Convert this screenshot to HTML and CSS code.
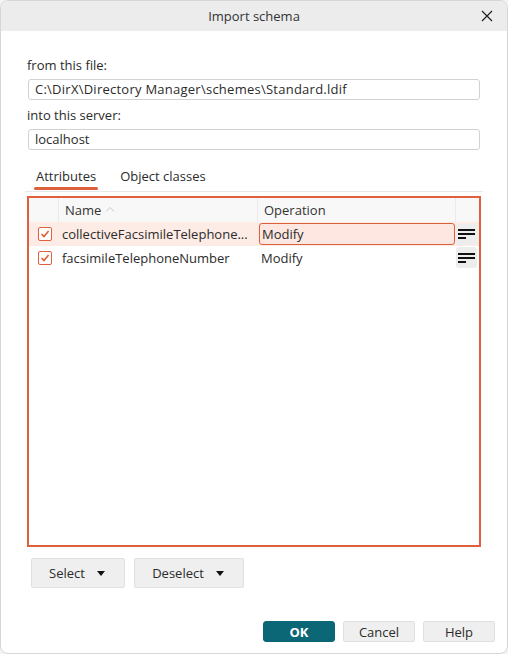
FILE: index.html
```html
<!DOCTYPE html>
<html lang="en">
<head>
<meta charset="utf-8">
<title>Import schema</title>
<link rel="stylesheet" href="styles.css">
</head>
<body>
<div class="window">
  <div class="titlebar">
    <span class="title">Import schema</span>
    <span class="close">
      <svg width="12" height="12" viewBox="0 0 12 12"><path d="M1 1L11 11M11 1L1 11" stroke="#222" stroke-width="1.2" fill="none"/></svg>
    </span>
  </div>
  <div class="content">
    <div class="label">from this file:</div>
    <div class="input path">C:\DirX\Directory Manager\schemes\Standard.ldif</div>
    <div class="label label-2">into this server:</div>
    <div class="input">localhost</div>

    <div class="tabs">
      <div class="tab active">Attributes</div>
      <div class="tab">Object classes</div>
    </div>

    <div class="table">
      <div class="row head">
        <div class="cell c-check"></div>
        <div class="cell c-name">Name
          <svg class="sort" width="10" height="6" viewBox="0 0 10 6"><path d="M1 5.5L5 1.5L9 5.5" stroke="#c8c8c8" stroke-width="1" fill="none"/></svg>
        </div>
        <div class="cell c-op">Operation</div>
        <div class="cell c-menu"></div>
      </div>
      <div class="row selected">
        <div class="cell c-check"><span class="checkbox"><svg width="10" height="10" viewBox="0 0 10 10"><path d="M1.5 5.2L4 7.6L8.6 2" stroke="#e0603c" stroke-width="1.6" fill="none"/></svg></span></div>
        <div class="cell c-name">collectiveFacsimileTelephone...</div>
        <div class="cell c-op"><span class="op-edit">Modify</span></div>
        <div class="cell c-menu"><span class="menu-btn"><i class="l1"></i><i class="l1"></i><i class="l2"></i></span></div>
      </div>
      <div class="row">
        <div class="cell c-check"><span class="checkbox"><svg width="10" height="10" viewBox="0 0 10 10"><path d="M1.5 5.2L4 7.6L8.6 2" stroke="#e0603c" stroke-width="1.6" fill="none"/></svg></span></div>
        <div class="cell c-name">facsimileTelephoneNumber</div>
        <div class="cell c-op"><span class="op-text">Modify</span></div>
        <div class="cell c-menu"><span class="menu-btn"><i class="l1"></i><i class="l1"></i><i class="l2"></i></span></div>
      </div>
    </div>

    <div class="actions">
      <button class="btn drop">Select <span class="caret"></span></button>
      <button class="btn drop">Deselect <span class="caret"></span></button>
    </div>
  </div>
  <div class="footer">
    <button class="btn primary">OK</button>
    <button class="btn">Cancel</button>
    <button class="btn">Help</button>
  </div>
</div>
</body>
</html>
```

FILE: styles.css
```css
* { box-sizing: border-box; }
html, body { margin: 0; padding: 0; background: #f4f4f4; }
body {
  font-family: "Open Sans", "Liberation Sans", sans-serif;
  font-size: 13px;
  color: #2b2b2b;
}
.window {
  width: 508px;
  height: 654px;
  background: #fff;
  border-radius: 8px;
  border: 1px solid #d6d6d6;
  overflow: hidden;
  display: flex;
  flex-direction: column;
}
.titlebar {
  height: 30px;
  background: #ececec;
  display: flex;
  align-items: center;
  justify-content: center;
  position: relative;
}
.title { color: #333; font-size: 13px; }
.close {
  position: absolute;
  right: 14px;
  top: 9px;
  width: 12px;
  height: 12px;
  display: flex;
}
.content {
  padding: 26px 24px 0 24px;
  display: flex;
  flex-direction: column;
}
.label {
  height: 16px;
  line-height: 16px;
  padding-left: 2px;
  color: #2b2b2b;
}
.label-2 { margin-top: 7px; }
.input {
  margin: 6px 3px 0 3px;
  height: 21px;
  line-height: 19px;
  border: 1px solid #d2d2d2;
  border-radius: 3px;
  padding: 0 6px;
  color: #2b2b2b;
}
.input.path { letter-spacing: 0.25px; }
.tabs {
  margin-top: 14px;
  display: flex;
  height: 28px;
  border-bottom: 1px solid #e8e8e8;
  gap: 4px;
}
.tab {
  padding: 0 10px;
  line-height: 24px;
  position: relative;
  color: #2b2b2b;
}
.tab.active::after {
  content: "";
  position: absolute;
  left: 9px;
  right: 0;
  bottom: 1px;
  height: 3px;
  border-radius: 2px;
  background: #e0603c;
}
.tab.active { padding-left: 11px; padding-right: 2px; }
.tab + .tab { margin-left: 18px; padding-left: 0; }

.table {
  margin: 4px 2px 0 2px;
  height: 351px;
  border: 2px solid #e0603c;
  display: flex;
  flex-direction: column;
}
.row {
  display: grid;
  grid-template-columns: 30px 199px 198px 1fr;
  height: 23px;
  align-items: stretch;
}
.row.head { height: 24px; background: #f8f8f8; color: #333; }
.row.head .cell { border-right: 1px solid #ebebeb; }
.row.head .cell:last-child { border-right: none; }
.row.selected { background: #fdebe5; height: 24px; }
.cell {
  display: flex;
  align-items: center;
  white-space: nowrap;
  overflow: hidden;
}
.head .c-name { padding-left: 6px; }
.head .c-op { padding-left: 6px; }
.sort { margin-left: 4px; margin-top: -2px; }
.c-check { justify-content: center; padding-left: 2px; }
.c-name { padding-left: 3px; }
.checkbox {
  width: 14px;
  height: 14px;
  border: 1px solid #e0603c;
  border-radius: 2px;
  background: #fff;
  display: flex;
  align-items: center;
  justify-content: center;
}
.op-edit {
  display: flex;
  align-items: center;
  width: 196px;
  height: 22px;
  margin-left: 1px;
  padding-left: 2px;
  border: 1px solid #d9603b;
  border-radius: 3px;
  background: #fde7e0;
}
.op-text { padding-left: 3px; }
.c-menu { justify-content: flex-start; }
.menu-btn {
  width: 21px;
  height: 21px;
  background: #ededed;
  border-radius: 3px;
  display: flex;
  flex-direction: column;
  justify-content: center;
  gap: 2px;
  padding-left: 2px;
}
.menu-btn i {
  display: block;
  height: 2px;
  background: #111;
}
.menu-btn .l1 { width: 17px; }
.menu-btn .l2 { width: 8px; }

.actions {
  margin-top: 11px;
  padding-left: 6px;
  display: flex;
  gap: 9px;
}
.btn {
  font-family: inherit;
  font-size: 13px;
  color: #2b2b2b;
  background: #efefef;
  border: 1px solid #e0e0e0;
  border-radius: 2px;
  height: 21px;
  width: 72px;
  padding: 0;
  display: flex;
  align-items: center;
  justify-content: center;
}
.btn.drop { height: 30px; width: 94px; gap: 12px; padding-right: 2px; }
.btn.drop + .btn.drop { width: 110px; }
.caret {
  width: 0; height: 0;
  border-left: 4.5px solid transparent;
  border-right: 4.5px solid transparent;
  border-top: 5px solid #111;
}
.footer {
  margin-top: auto;
  padding: 0 12px 11px 0;
  display: flex;
  justify-content: flex-end;
  gap: 8px;
}
.btn.primary {
  background: #0b6675;
  border-color: #0b6675;
  color: #fff;
  font-weight: 700;
  border-radius: 3px;
}
```
